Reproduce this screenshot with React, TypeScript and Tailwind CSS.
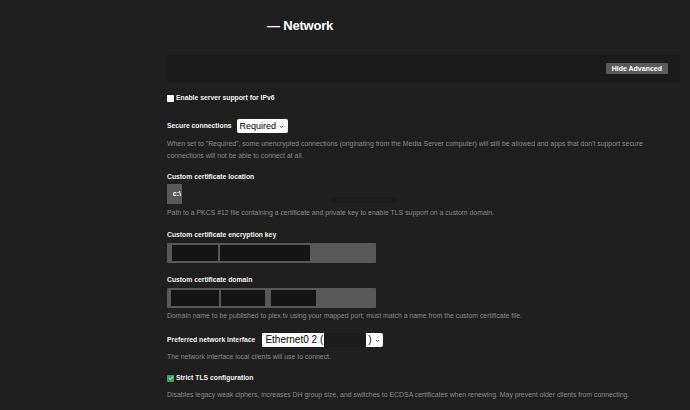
import React from 'react';

const font = { fontFamily: '"Liberation Sans", Arial, sans-serif' };

const Label: React.FC<{ children: React.ReactNode }> = ({ children }) => (
    <div className="text-[6.8px] font-bold leading-[10px] text-[#f2f2f2] whitespace-nowrap">{children}</div>
);

const Hint: React.FC<{ children: React.ReactNode }> = ({ children }) => (
    <p className="text-[6.9px] leading-[12px] text-[#8c8c8c] whitespace-nowrap">{children}</p>
);

const Redacted: React.FC<{ w: string }> = ({ w }) => (
    <span className={`block h-[16px] bg-[#141414] ${w}`} />
);

const Chevron = () => (
    <svg viewBox="0 0 8 8" className="w-[5px] h-[5px] shrink-0">
        <path d="M1.5 3 L4 5.5 L6.5 3" fill="none" stroke="black" strokeWidth="1.2" />
    </svg>
);

export default function App() {
    return (
        <div className="w-[690px] h-[410px] overflow-hidden bg-[#1f1f1f] text-white" style={font}>
            <div className="pl-[267px] pt-[18px] h-[55px]">
                <h1 className="text-[13px] font-bold leading-[15px] tracking-[-0.2px]">— Network</h1>
            </div>

            {/* advanced toolbar */}
            <div className="ml-[167px] w-[513px] h-[27px] bg-[#1a1a1a] flex items-center justify-end pr-[12px]">
                <button className="h-[11px] px-[6px] bg-[#5a5a5a] rounded-[1px] text-[7px] font-bold leading-[11px] text-white">
                    Hide Advanced
                </button>
            </div>

            <div className="pl-[167px] pr-[20px] flex flex-col">
                <label className="mt-[11px] flex items-center gap-[2px] text-[6.8px] font-bold leading-[10px] text-[#f2f2f2]">
                    <span className="w-[7px] h-[7px] bg-white rounded-[1px]" />
                    Enable server support for IPv6
                </label>

                <div className="mt-[16px] flex items-center gap-[5px]">
                    <Label>Secure connections</Label>
                    <div className="h-[14px] w-[51px] bg-white rounded-[2px] flex items-center justify-between pl-[3px] pr-[4px] text-black">
                        <span className="text-[9px] leading-[14px]">Required</span>
                        <Chevron />
                    </div>
                </div>

                <div className="mt-[5px]">
                    <Hint>
                        When set to "Required", some unencrypted connections (originating from the Media Server computer) will still be allowed and apps that don't support secure
                        <br />
                        connections will not be able to connect at all.
                    </Hint>
                </div>

                <div className="mt-[10px]">
                    <Label>Custom certificate location</Label>
                </div>
                <div className="mt-[2px] flex items-end">
                    <div className="w-[15px] h-[20px] bg-[#585858] flex items-center justify-end pr-[1px]">
                        <span className="text-[7px] font-bold leading-[10px]">c:\</span>
                    </div>
                    <span className="ml-[148px] mb-[1px] block w-[68px] h-[6px] bg-[#1b1b1b]" />
                </div>
                <div className="mt-[3px]">
                    <Hint>Path to a PKCS #12 file containing a certificate and private key to enable TLS support on a custom domain.</Hint>
                </div>

                <div className="mt-[11px]">
                    <Label>Custom certificate encryption key</Label>
                </div>
                <div className="mt-[3px] w-[209px] h-[20px] bg-[#585858] rounded-[1px] flex items-center pl-[5px] gap-[2px]">
                    <Redacted w="w-[46px]" />
                    <Redacted w="w-[90px]" />
                </div>

                <div className="mt-[12px]">
                    <Label>Custom certificate domain</Label>
                </div>
                <div className="mt-[3px] w-[209px] h-[20px] bg-[#585858] rounded-[1px] flex items-center pl-[4px] gap-[2px]">
                    <Redacted w="w-[48px]" />
                    <Redacted w="w-[44px]" />
                    <span className="ml-[2px]" />
                    <Redacted w="w-[45px]" />
                </div>
                <div className="mt-[2px]">
                    <Hint>Domain name to be published to plex.tv using your mapped port; must match a name from the custom certificate file.</Hint>
                </div>

                <div className="mt-[11px] flex items-center gap-[7px]">
                    <Label>Preferred network interface</Label>
                    <div className="h-[14px] flex items-center text-black">
                        <div className="h-[14px] bg-white rounded-l-[1px] flex items-center pl-[3px] pr-[1px]">
                            <span className="text-[10px] leading-[14px]">Ethernet0 2 (</span>
                        </div>
                        <span className="block w-[42px] h-[14px] bg-[#1a1a1a]" />
                        <div className="h-[14px] bg-white rounded-r-[2px] flex items-center gap-[3px] pl-[2px] pr-[3px]">
                            <span className="text-[10px] leading-[14px]">)</span>
                            <Chevron />
                        </div>
                    </div>
                </div>
                <div className="mt-[4px]">
                    <Hint>The network interface local clients will use to connect.</Hint>
                </div>

                <label className="mt-[10px] flex items-center gap-[2px] text-[6.8px] font-bold leading-[10px] text-[#f2f2f2]">
                    <span className="w-[7px] h-[7px] bg-[#3aa655] rounded-[1px] flex items-center justify-center">
                        <svg viewBox="0 0 10 10" className="w-[6px] h-[6px]">
                            <path d="M2 5.2 L4.2 7.3 L8 2.8" fill="none" stroke="white" strokeWidth="1.6" />
                        </svg>
                    </span>
                    Strict TLS configuration
                </label>
                <div className="mt-[6px]">
                    <Hint>Disables legacy weak ciphers, increases DH group size, and switches to ECDSA certificates when renewing. May prevent older clients from connecting.</Hint>
                </div>
            </div>
        </div>
    );
}
